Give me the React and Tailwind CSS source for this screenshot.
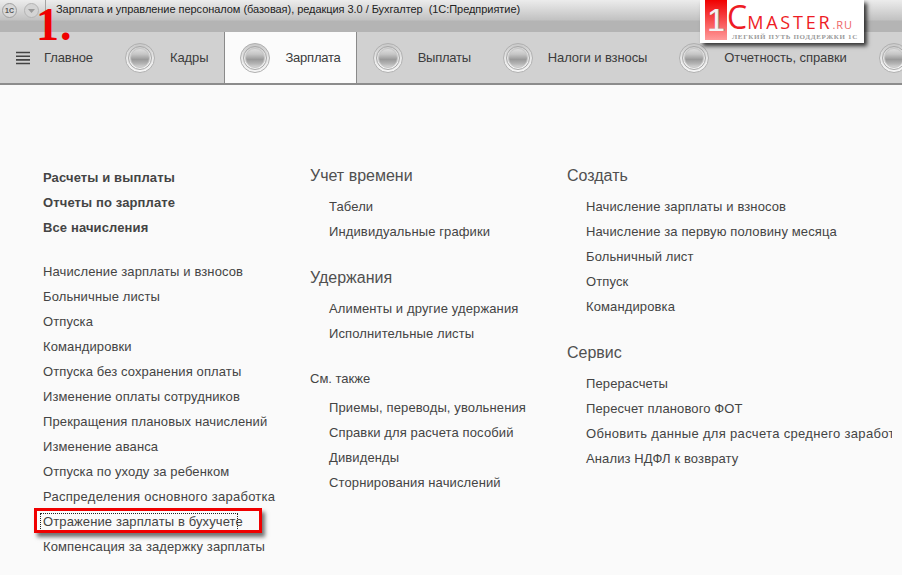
const font = { fontFamily: '"Liberation Sans", Arial, sans-serif' };

function Orb() {
  return (
    <svg width="30" height="30" viewBox="0 0 30 30" className="shrink-0">
      <defs>
        <linearGradient id="orbRing" x1="0" y1="0" x2="0" y2="1">
          <stop offset="0" stopColor="#c8c8c8" />
          <stop offset="0.5" stopColor="#e8e8e8" />
          <stop offset="1" stopColor="#f6f6f6" />
        </linearGradient>
        <linearGradient id="orbCore" x1="0" y1="0" x2="0" y2="1">
          <stop offset="0" stopColor="#e0e0e0" />
          <stop offset="0.3" stopColor="#c6c6c6" />
          <stop offset="0.58" stopColor="#9a9a9a" />
          <stop offset="0.8" stopColor="#b4b4b4" />
          <stop offset="1" stopColor="#d8d8d8" />
        </linearGradient>
      </defs>
      <circle cx="15" cy="15" r="14.5" fill="url(#orbRing)" stroke="#b0b0b0" />
      <circle cx="15" cy="15" r="11.5" fill="none" stroke="#a8a8a8" />
      <circle cx="15" cy="15" r="9.5" fill="url(#orbCore)" stroke="#c6c6c6" />
    </svg>
  );
}

function Tab({ label, active, labelClass = "tracking-[-0.1px]" }) {
  return (
    <div className={`flex h-full shrink-0 items-center gap-[15px] ${active ? "border-x border-[#8a8a8a] bg-[#fbfbfb] px-[15px]" : "px-4"}`}>
      <Orb />
      {label && <span className={`whitespace-nowrap text-[13px] text-[#3c3c3c] ${labelClass}`}>{label}</span>}
    </div>
  );
}

function Link({ children, bold, className = "tracking-[0.12px]" }) {
  return (
    <div className={`h-[25px] whitespace-nowrap text-[13px] leading-[25px] text-[#444] ${className} ${bold ? "font-bold" : ""}`}>
      {children}
    </div>
  );
}

function Heading({ children }) {
  return <div className="h-[25px] whitespace-nowrap text-base leading-[25px] text-[#505050]">{children}</div>;
}

function Group({ title, children, className = "" }) {
  return (
    <div className={className}>
      <Heading>{title}</Heading>
      <div className="mt-[6px] pl-[19px]">{children}</div>
    </div>
  );
}

const boldLinks = ["Расчеты и выплаты", "Отчеты по зарплате", "Все начисления"];
const docs = [
  "Начисление зарплаты и взносов",
  "Больничные листы",
  "Отпуска",
  "Командировки",
  "Отпуска без сохранения оплаты",
  "Изменение оплаты сотрудников",
  "Прекращения плановых начислений",
  "Изменение аванса",
  "Отпуска по уходу за ребенком",
];

export default function App() {
  return (
    <div className="relative h-[575px] w-[902px] overflow-hidden bg-[#fafafa]" style={font}>
      {/* Title bar */}
      <div className="flex h-8 items-center bg-[linear-gradient(#ececec_0%,#d8d8d8_30%,#c2c2c2_62%,#b4b4b4_66%,#b4b4b4_100%)]">
        <div className="flex h-full w-[46px] shrink-0 items-start gap-[7px] border-r border-[#a4a4a4] pl-[2px] pt-[3px]">
          <div className="flex h-[15px] w-[15px] items-center justify-center rounded-full border border-[#a0a0a0] bg-[#d8d8d8]">
            <span className="text-[7px] font-bold leading-none text-[#555]">1С</span>
          </div>
          <div className="flex h-[15px] w-[15px] items-center justify-center rounded-full border border-[#b4b4b4] bg-[#d4d4d4]">
            <svg width="7" height="4" viewBox="0 0 7 4"><path d="M0 0h7L3.5 4z" fill="#9a9a9a" /></svg>
          </div>
        </div>
        <div className="mb-[13px] ml-[10px] whitespace-pre text-[11px] leading-none tracking-[-0.05px] text-[#222]">
          Зарплата и управление персоналом (базовая), редакция 3.0 / Бухгалтер  (1С:Предприятие)
        </div>
      </div>

      {/* Section tabs */}
      <div className="flex h-[53px] overflow-hidden border-b-2 border-[#8c8c8c] bg-[#d1d1d1]">
        <div className="flex h-full shrink-0 items-center gap-[14px] px-4">
          <svg width="14" height="14" viewBox="0 0 14 14" className="shrink-0">
            <path d="M0 1.5h14M0 5.2h14M0 8.9h14M0 12.5h14" stroke="#444" strokeWidth="1.6" />
          </svg>
          <span className="whitespace-nowrap text-[13px] tracking-[-0.1px] text-[#3c3c3c]">Главное</span>
        </div>
        <Tab label="Кадры" />
        <Tab label="Зарплата" active labelClass="tracking-[-0.22px]" />
        <Tab label="Выплаты" labelClass="tracking-[-0.25px]" />
        <Tab label="Налоги и взносы" />
        <Tab label="Отчетность, справки" />
        <Tab />
      </div>

      {/* Content */}
      <div className="flex pt-[78px]">
        <div className="w-[310px] shrink-0 pl-[43px] pt-[2px]">
          {boldLinks.map((t) => (
            <Link key={t} bold>{t}</Link>
          ))}
          <div className="mt-[19px]">
            {docs.map((t) => (
              <Link key={t}>{t}</Link>
            ))}
            <Link className="tracking-[0.27px]">Распределения основного заработка</Link>
            <div className="relative h-[25px] whitespace-nowrap text-[13px] leading-[25px] tracking-[0.12px] text-[#444]">
              Отражение зарплаты в бухучете
              <div className="absolute -left-[3px] top-[4px] h-[18px] w-[198px] border border-dotted border-[#222]" />
            </div>
            <Link>Компенсация за задержку зарплаты</Link>
          </div>
        </div>

        <div className="w-[257px] shrink-0">
          <Group title="Учет времени">
            <Link>Табели</Link>
            <Link>Индивидуальные графики</Link>
          </Group>
          <Group className="mt-[21px]" title="Удержания">
            <Link>Алименты и другие удержания</Link>
            <Link>Исполнительные листы</Link>
          </Group>
          <div className="mt-[20px] h-[25px] text-[13px] leading-[25px] text-[#444]">См. также</div>
          <div className="mt-[4px] pl-[19px]">
            {["Приемы, переводы, увольнения", "Справки для расчета пособий", "Дивиденды", "Сторнирования начислений"].map((t) => (
              <Link key={t}>{t}</Link>
            ))}
          </div>
        </div>

        <div className="w-[325px] shrink-0 overflow-hidden">
          <Group title="Создать">
            <Link>Начисление зарплаты и взносов</Link>
            <Link>Начисление за первую половину месяца</Link>
            <Link>Больничный лист</Link>
            <Link>Отпуск</Link>
            <Link>Командировка</Link>
          </Group>
          <Group className="mt-[21px]" title="Сервис">
            <Link>Перерасчеты</Link>
            <Link>Пересчет планового ФОТ</Link>
            <Link className="tracking-[0.32px]">Обновить данные для расчета среднего заработка</Link>
            <Link>Анализ НДФЛ к возврату</Link>
          </Group>
        </div>
      </div>

      {/* Annotations over the screenshot */}
      <div
        className="absolute left-[36px] top-[2px] flex items-baseline text-[46px] font-bold leading-[46px] text-[#f00000]"
        style={{ fontFamily: '"Liberation Serif", serif' }}
      >
        <span>1</span>
        <span className="ml-[1px]">.</span>
      </div>

      <div className="absolute left-[34px] top-[508px] h-[25px] w-[228px] border-[3px] border-[#f00000] shadow-[3px_4px_4px_rgba(0,0,0,0.55)]" />

      <div className="absolute left-[700px] top-0 flex h-[43px] w-[164px] bg-white shadow-[3px_3px_4px_rgba(0,0,0,0.75)]">
        <div className="ml-[5px] flex h-[40px] w-[22px] items-center justify-center bg-[linear-gradient(#f00000,#ff9a9a)] text-[32px] leading-none text-[#f4f4f4] [text-shadow:1px_0_0_#999]">
          1
        </div>
        <div className="flex flex-col" style={{ fontFamily: '"Open Sans", sans-serif' }}>
          <div className="flex h-[34px] items-baseline whitespace-nowrap leading-none text-[#ee1c25]">
            <span className="text-[32px] leading-[34px]">C</span>
            <span className="text-[18px] tracking-[2.8px]">MASTER</span>
            <span className="text-[11px] tracking-[1px] text-[#e66]">.RU</span>
          </div>
          <div
            className="ml-[5px] whitespace-nowrap text-[7px] font-bold leading-none tracking-[0.65px] text-[#999]"
            style={{ fontFamily: '"Liberation Serif", serif' }}
          >
            ЛЕГКИЙ ПУТЬ ПОДДЕРЖКИ 1С
          </div>
        </div>
      </div>
    </div>
  );
}
